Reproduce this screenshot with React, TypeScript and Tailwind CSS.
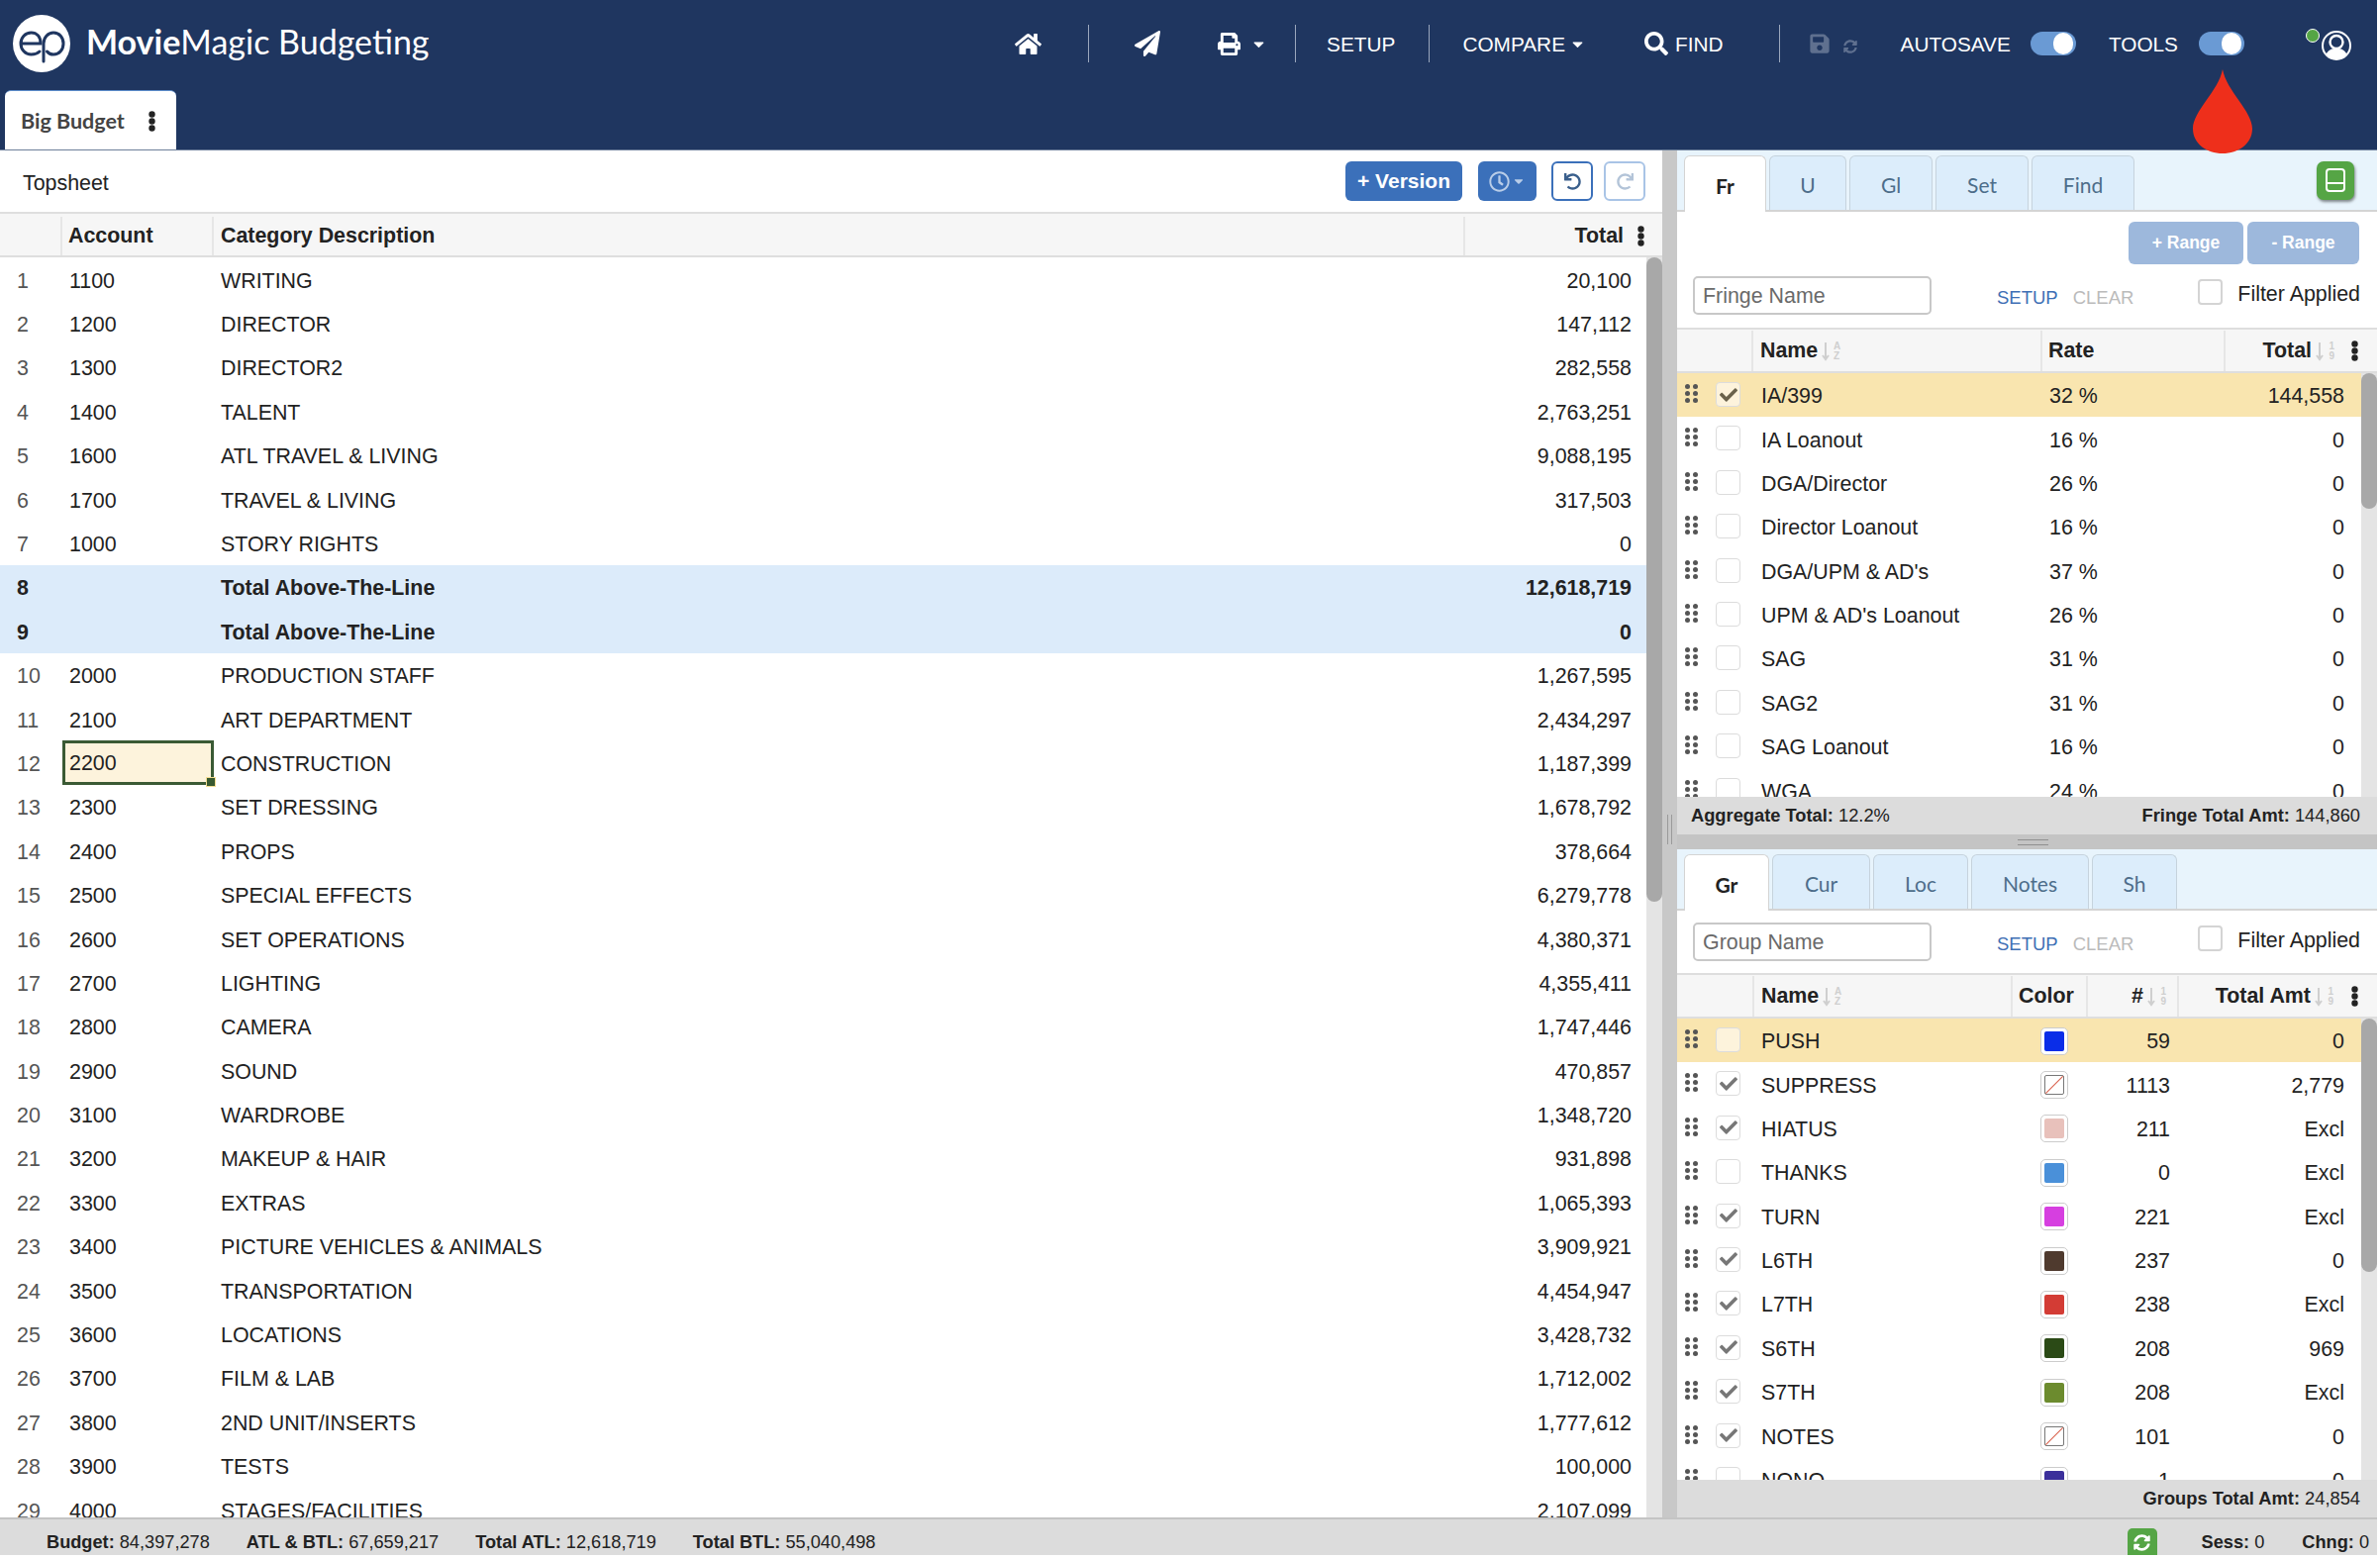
import React from 'react';
import { FaHome, FaPaperPlane, FaPrint, FaSearch, FaSave, FaSyncAlt, FaCheck, FaUndo, FaRedo, FaRegClock, FaCaretDown } from 'react-icons/fa';

const topsheet: Array<[string, string, string, string?]> = [
  ['1', '1100', 'WRITING', '20,100'],
  ['2', '1200', 'DIRECTOR', '147,112'],
  ['3', '1300', 'DIRECTOR2', '282,558'],
  ['4', '1400', 'TALENT', '2,763,251'],
  ['5', '1600', 'ATL TRAVEL & LIVING', '9,088,195'],
  ['6', '1700', 'TRAVEL & LIVING', '317,503'],
  ['7', '1000', 'STORY RIGHTS', '0'],
  ['8', '', 'Total Above-The-Line', '12,618,719'],
  ['9', '', 'Total Above-The-Line', '0'],
  ['10', '2000', 'PRODUCTION STAFF', '1,267,595'],
  ['11', '2100', 'ART DEPARTMENT', '2,434,297'],
  ['12', '2200', 'CONSTRUCTION', '1,187,399'],
  ['13', '2300', 'SET DRESSING', '1,678,792'],
  ['14', '2400', 'PROPS', '378,664'],
  ['15', '2500', 'SPECIAL EFFECTS', '6,279,778'],
  ['16', '2600', 'SET OPERATIONS', '4,380,371'],
  ['17', '2700', 'LIGHTING', '4,355,411'],
  ['18', '2800', 'CAMERA', '1,747,446'],
  ['19', '2900', 'SOUND', '470,857'],
  ['20', '3100', 'WARDROBE', '1,348,720'],
  ['21', '3200', 'MAKEUP & HAIR', '931,898'],
  ['22', '3300', 'EXTRAS', '1,065,393'],
  ['23', '3400', 'PICTURE VEHICLES & ANIMALS', '3,909,921'],
  ['24', '3500', 'TRANSPORTATION', '4,454,947'],
  ['25', '3600', 'LOCATIONS', '3,428,732'],
  ['26', '3700', 'FILM & LAB', '1,712,002'],
  ['27', '3800', '2ND UNIT/INSERTS', '1,777,612'],
  ['28', '3900', 'TESTS', '100,000'],
  ['29', '4000', 'STAGES/FACILITIES', '2,107,099'],
];

const fringes = [
  ['IA/399', '32 %', '144,558'],
  ['IA Loanout', '16 %', '0'],
  ['DGA/Director', '26 %', '0'],
  ['Director Loanout', '16 %', '0'],
  ['DGA/UPM & AD\'s', '37 %', '0'],
  ['UPM & AD\'s Loanout', '26 %', '0'],
  ['SAG', '31 %', '0'],
  ['SAG2', '31 %', '0'],
  ['SAG Loanout', '16 %', '0'],
  ['WGA', '24 %', '0'],
];

const groups: Array<{ name: string; on: boolean; color: string | null; n: string; amt: string }> = [
  { name: 'PUSH', on: false, color: '#0a2de8', n: '59', amt: '0' },
  { name: 'SUPPRESS', on: true, color: null, n: '1113', amt: '2,779' },
  { name: 'HIATUS', on: true, color: '#e8c1bb', n: '211', amt: 'Excl' },
  { name: 'THANKS', on: false, color: '#4a90d9', n: '0', amt: 'Excl' },
  { name: 'TURN', on: true, color: '#d63fe0', n: '221', amt: 'Excl' },
  { name: 'L6TH', on: true, color: '#4f3a2e', n: '237', amt: '0' },
  { name: 'L7TH', on: true, color: '#d33c35', n: '238', amt: 'Excl' },
  { name: 'S6TH', on: true, color: '#2b4a16', n: '208', amt: '969' },
  { name: 'S7TH', on: true, color: '#6c8b2e', n: '208', amt: 'Excl' },
  { name: 'NOTES', on: true, color: null, n: '101', amt: '0' },
  { name: 'NONO', on: false, color: '#3b2f9b', n: '1', amt: '0' },
];

const Logo = () => (
  <svg width="58" height="58" viewBox="0 0 58 58" className="ml-[13px] shrink-0">
    <circle cx="29" cy="29" r="29" fill="#fff" />
    <g fill="none" stroke="#1f3660" strokeWidth="3" strokeLinecap="round">
      <path d="M8 29 H28 C28 22 24 18 18.5 18 C12.5 18 8 23 8 29 C8 35 12.5 40 18.5 40 C22 40 25 39 27 37" />
      <path d="M31 47 V29 C31 23 35.500 18 41 18 C47 18 51 23 51 29 C51 35 47 40 41 40 C38.500 40 36 39 34.500 37" />
    </g>
  </svg>
);

const Toggle = () => (
  <div className="flex h-[24px] w-[46px] items-center justify-end rounded-full bg-[#6a9ad4] pr-[3px]">
    <div className="h-[22px] w-[20px] rounded-full bg-white" />
  </div>
);

const Sep = () => <div className="h-[38px] w-px bg-[#9aa7bd]" />;

const Dots = ({ className = '' }: { className?: string }) => (
  <svg width="7" height="21" viewBox="0 0 7 21" className={className} fill="#222">
    <circle cx="3.500" cy="3.500" r="3.200" />
    <circle cx="3.500" cy="10.500" r="3.200" />
    <circle cx="3.500" cy="17.500" r="3.200" />
  </svg>
);

const Grip = () => (
  <svg width="13" height="19" viewBox="0 0 13 19" className="ml-[8px] mt-[11px] shrink-0" fill="#555">
    <circle cx="2.500" cy="2.500" r="2.500" />
    <circle cx="10.500" cy="2.500" r="2.500" />
    <circle cx="2.500" cy="9.500" r="2.500" />
    <circle cx="10.500" cy="9.500" r="2.500" />
    <circle cx="2.500" cy="16.500" r="2.500" />
    <circle cx="10.500" cy="16.500" r="2.500" />
  </svg>
);

const Check = ({ on, active }: { on: boolean; active?: boolean }) => (
  <div
    className={`ml-[18px] mt-[9px] flex h-[25px] w-[25px] shrink-0 items-center justify-center rounded-[4px] border border-[#dcdcdc] ${
      active ? 'bg-[#fdf3dc]' : 'bg-white'
    }`}
  >
    {on && <FaCheck size={18} className={active ? 'text-[#6a624c]' : 'text-[#777777]'} />}
  </div>
);

const SortIcon = ({ top, bottom }: { top: string; bottom: string }) => (
  <span className="ml-[4px] inline-flex w-[19px] items-center justify-between">
    <svg width="8" height="20" viewBox="0 0 8 20" fill="none" stroke="#cfcfcf" strokeWidth="2">
      <path d="M4 1 V18 M1 14 L4 18 L7 14" />
    </svg>
    <span className="flex flex-col text-[10px] leading-[10px] font-bold text-[#cfcfcf]">
      <span>{top}</span>
      <span>{bottom}</span>
    </span>
  </span>
);

const Tabs = ({ tabs }: { tabs: Array<[string, string]> }) => (
  <div className="flex h-full items-end gap-[3px] pl-[7px]">
    {tabs.map(([label, width], i) => (
      <div
        key={label}
        className={`${width} flex items-center justify-center rounded-t-[6px] border border-b-0 pt-[3px] font-['Lato',sans-serif] text-[21px] ${
          i === 0
            ? '-mb-[2px] h-[57px] border-[#d4d4d4] bg-white font-bold text-[#222]'
            : 'h-[55px] border-[#c6d3dd] bg-[#dcedfb] text-[#4d6d8a]'
        }`}
      >
        {label}
      </div>
    ))}
  </div>
);

const FilterRow = ({ placeholder }: { placeholder: string }) => (
  <div className="flex items-center pl-[16px] pr-[17px]">
    <div className="flex h-[39px] w-[241px] items-center rounded-[5px] border-2 border-[#c8c8c8] bg-white pl-[8px] pt-[2px] text-[#6a6a6a]">
      {placeholder}
    </div>
    <span className="ml-[66px] pt-[4px] text-[18.5px] text-[#3f6fb5]">SETUP</span>
    <span className="ml-[15px] pt-[4px] text-[18.5px] text-[#bbbbbb]">CLEAR</span>
    <div className="ml-auto mt-[-6px] flex items-center">
      <div className="h-[26px] w-[25px] rounded-[4px] border-2 border-[#d4d4d4] bg-white" />
      <span className="ml-[15px] pt-[3px]">Filter Applied</span>
    </div>
  </div>
);

const ColorChip = ({ color }: { color: string | null }) => (
  <div className="mt-[1px] flex h-[28px] w-[28px] items-center justify-center rounded-[5px] border border-[#cccccc] bg-white p-[3px]">
    {color ? (
      <div className="h-full w-full rounded-[2px]" style={{ backgroundColor: color }} />
    ) : (
      <svg width="20" height="20" viewBox="0 0 20 20" className="rounded-[2px] border border-[#777]">
        <path d="M0 20 L20 0" stroke="#d9604c" strokeWidth="1.200" />
      </svg>
    )}
  </div>
);

const TrackThumb = ({ height }: { height: string }) => (
  <div className="w-[16px] shrink-0 bg-[#e4e4e4]">
    <div className={`${height} w-full rounded-full bg-[#a8a8a8]`} />
  </div>
);

export default function App() {
  return (
    <div className="relative flex h-[1571px] w-[2401px] flex-col overflow-hidden bg-white font-['Liberation_Sans',Arial,sans-serif] text-[21.4px] text-[#222]">
      {/* header */}
      <header className="h-[152px] shrink-0 border-b border-[#6d7f9a] bg-[#1f3660] text-white">
        <div className="flex h-[88px] items-center">
          <Logo />
          <div className="mb-[5px] ml-[16px] font-['Lato',sans-serif] text-[34px]">
            <span className="font-bold">Movie</span>Magic Budgeting
          </div>
          <div className="ml-auto flex items-center pr-[26px] text-[20.8px]">
            <FaHome size={27} />
            <div className="ml-[47px]"><Sep /></div>
            <FaPaperPlane size={26} className="ml-[46px]" />
            <FaPrint size={23} className="ml-[58px]" />
            <FaCaretDown size={17} className="ml-[10px]" />
            <div className="ml-[28px]"><Sep /></div>
            <span className="ml-[31px] pt-[2px]">SETUP</span>
            <div className="ml-[34px]"><Sep /></div>
            <span className="ml-[33px] pt-[2px]">COMPARE</span>
            <FaCaretDown size={17} className="ml-[4px]" />
            <FaSearch size={24} className="ml-[59px]" />
            <span className="ml-[7px] pt-[2px]">FIND</span>
            <div className="ml-[56px]"><Sep /></div>
            <FaSave size={22} className="ml-[29px] text-[#5f708f]" />
            <FaSyncAlt size={14} className="ml-[13px] mt-[6px] text-[#5f708f]" />
            <span className="ml-[44px] pt-[2px]">AUTOSAVE</span>
            <div className="ml-[20px]"><Toggle /></div>
            <span className="ml-[33px] pt-[2px]">TOOLS</span>
            <div className="ml-[21px]"><Toggle /></div>
            <div className="mb-[16px] ml-[62px] h-[14px] w-[14px] rounded-full border border-white bg-[#55a545]" />
            <svg width="30" height="30" viewBox="0 0 30 30" className="ml-[2px] mt-[4px]">
              <circle cx="15" cy="15" r="14" fill="none" stroke="#fff" strokeWidth="2" />
              <circle cx="15" cy="11.500" r="6.500" fill="none" stroke="#fff" strokeWidth="2.400" />
              <path d="M4.500 24 C7 19 10 18 15 18 C20 18 23 19 25.500 24 C22 28 19 29 15 29 C11 29 7 28 4.500 24 Z" fill="#fff" />
            </svg>
          </div>
        </div>
        <div className="flex h-[63px] items-end pl-[5px]">
          <div className="flex h-[60px] w-[173px] items-center rounded-t-[6px] border-t border-[#5b8bc9] bg-white pl-[16px] pt-[2px] font-['Lato',sans-serif] text-[21.5px] font-bold text-[#444]">
            Big Budget
            <Dots className="ml-[24px]" />
          </div>
        </div>
      </header>

      <main className="flex min-h-0 flex-1">
        {/* topsheet */}
        <section className="flex w-[1679px] shrink-0 flex-col">
          <div className="flex h-[62px] shrink-0 items-center pl-[23px] pr-[17px]">
            <span className="pt-[5px]">Topsheet</span>
            <div className="ml-auto flex h-[40px] w-[118px] items-center justify-center rounded-[6px] bg-[#3b70ba] text-[21px] font-bold text-white">
              + Version
            </div>
            <div className="ml-[16px] flex h-[40px] w-[59px] items-center justify-center rounded-[6px] bg-[#3b70ba] text-[#b9cde8]">
              <FaRegClock size={21} />
              <FaCaretDown size={14} className="ml-[2px]" />
            </div>
            <div className="ml-[15px] flex h-[40px] w-[42px] items-center justify-center rounded-[6px] border-2 border-[#3b70ba] text-[#3a5f8c]">
              <FaUndo size={17} />
            </div>
            <div className="ml-[11px] flex h-[40px] w-[42px] items-center justify-center rounded-[6px] border-2 border-[#a9c4e6] text-[#b3c4d8]">
              <FaRedo size={17} />
            </div>
          </div>
          <div className="flex h-[46px] shrink-0 border-y-2 border-[#dedede] bg-[#f6f6f6] pt-[3px] font-bold">
            <div className="w-[63px] border-r-2 border-[#e6e6e6]" />
            <div className="flex w-[153px] items-center border-r-2 border-[#e6e6e6] pl-[6px]">Account</div>
            <div className="flex w-[1264px] items-center border-r-2 border-[#e6e6e6] pl-[7px]">Category Description</div>
            <div className="flex flex-1 items-center justify-end pr-[18px]">
              Total
              <Dots className="ml-[14px]" />
            </div>
          </div>
          <div className="flex min-h-0 flex-1">
            <div className="min-w-0 flex-1 overflow-hidden">
              {topsheet.map(([idx, acct, desc, total]) => {
                const subtotal = acct === '';
                const selected = acct === '2200';
                return (
                  <div key={idx} className={`flex h-[44.4px] items-center ${subtotal ? 'bg-[#dcebfa] font-bold' : ''}`}>
                    <div className={`w-[63px] pl-[17px] pt-[3px] ${subtotal ? 'text-[#222]' : 'text-[#555]'}`}>{idx}</div>
                    <div
                      className={`relative flex h-full w-[153px] items-center pl-[7px] pt-[3px] ${
                        selected ? 'border-[3px] border-[#3a5a34] bg-[#fdf3dc] !pl-[4px] !pt-[1px]' : ''
                      }`}
                    >
                      {acct}
                      {selected && (
                        <div className="absolute -bottom-[5px] -right-[5px] h-[10px] w-[10px] border border-[#f3dc92] bg-[#38592f]" />
                      )}
                    </div>
                    <div className="w-[1264px] pl-[7px] pt-[3px]">{desc}</div>
                    <div className="flex-1 pr-[15px] pt-[3px] text-right">{total}</div>
                  </div>
                );
              })}
            </div>
            <TrackThumb height="h-[651px]" />
          </div>
        </section>

        {/* splitter */}
        <div className="flex w-[15px] shrink-0 items-center justify-center bg-[#c8c8c8]">
          <div className="mb-[10px] h-[30px] w-[5px] border-x border-[#9a9a9a]" />
        </div>

        {/* right panes */}
        <section className="flex min-w-0 flex-1 flex-col">
          {/* fringes */}
          <div className="h-[62px] shrink-0 border-b-2 border-[#d4d4d4] bg-[#e8f4fc]">
            <div className="flex h-full items-center">
              <Tabs tabs={[['Fr', 'w-[83px]'], ['U', 'w-[78px]'], ['Gl', 'w-[84px]'], ['Set', 'w-[94px]'], ['Find', 'w-[104px]']]} />
              <div className="ml-auto mr-[23px] flex h-[39px] w-[38px] items-center justify-center rounded-[7px] bg-[#55a545] shadow-[1px_2px_3px_rgba(0,0,0,0.45)]">
                <svg width="20" height="24" viewBox="0 0 20 24" fill="none" stroke="#fff" strokeWidth="2">
                  <rect x="1" y="1" width="18" height="22" rx="3" />
                  <path d="M1 15 H19" />
                </svg>
              </div>
            </div>
          </div>
          <div className="flex h-[117px] shrink-0 flex-col">
            <div className="flex justify-end gap-[4px] pr-[18px] pt-[10px]">
              <div className="flex h-[43px] w-[116px] items-center justify-center rounded-[6px] bg-[#9db8dc] text-[17.5px] font-bold text-white">+ Range</div>
              <div className="flex h-[43px] w-[113px] items-center justify-center rounded-[6px] bg-[#9db8dc] text-[17.5px] font-bold text-white">- Range</div>
            </div>
            <div className="mt-[12px]">
              <FilterRow placeholder="Fringe Name" />
            </div>
          </div>
          <div className="flex h-[46px] shrink-0 border-y-2 border-[#dedede] bg-[#f6f6f6] pt-[1px] font-bold">
            <div className="w-[77px] border-r-2 border-[#e6e6e6]" />
            <div className="flex w-[292px] items-center border-r-2 border-[#e6e6e6] pl-[7px]">
              Name
              <SortIcon top="A" bottom="Z" />
            </div>
            <div className="flex w-[185px] items-center border-r-2 border-[#e6e6e6] pl-[6px]">Rate</div>
            <div className="flex flex-1 items-center justify-end pr-[19px]">
              Total
              <SortIcon top="1" bottom="9" />
              <Dots className="ml-[17px]" />
            </div>
          </div>
          <div className="flex h-[428px] shrink-0">
            <div className="min-w-0 flex-1 overflow-hidden">
              {fringes.map(([name, rate, total], i) => (
                <div key={name} className={`flex h-[44.4px] ${i === 0 ? 'bg-[#f9e5af]' : ''}`}>
                  <div className="flex w-[77px]">
                    <Grip />
                    <Check on={i === 0} active={i === 0} />
                  </div>
                  <div className="flex w-[292px] items-center pl-[8px] pt-[2px]">{name}</div>
                  <div className="flex w-[185px] items-center pl-[7px] pt-[2px]">{rate}</div>
                  <div className="flex flex-1 items-center justify-end pr-[17px] pt-[2px]">{total}</div>
                </div>
              ))}
            </div>
            <TrackThumb height="h-[137px]" />
          </div>
          <div className="flex h-[38px] shrink-0 items-center justify-between bg-[#dcdcdc] pl-[14px] pr-[17px] text-[18.3px]">
            <span><b>Aggregate Total:</b> 12.2%</span>
            <span><b>Fringe Total Amt:</b> 144,860</span>
          </div>
          <div className="flex h-[15px] shrink-0 items-center justify-center bg-[#c4c4c4] pl-[12px]">
            <div className="h-[6px] w-[31px] border-y border-[#8f8f8f]" />
          </div>

          {/* groups */}
          <div className="h-[62px] shrink-0 border-b-2 border-[#d4d4d4] bg-[#e8f4fc]">
            <Tabs tabs={[['Gr', 'w-[86px]'], ['Cur', 'w-[99px]'], ['Loc', 'w-[96px]'], ['Notes', 'w-[119px]'], ['Sh', 'w-[86px]']]} />
          </div>
          <div className="flex h-[63px] shrink-0 flex-col pt-[12px]">
            <FilterRow placeholder="Group Name" />
          </div>
          <div className="flex h-[46px] shrink-0 border-y-2 border-[#dedede] bg-[#f6f6f6] pt-[1px] font-bold">
            <div className="w-[78px] border-r-2 border-[#e6e6e6]" />
            <div className="flex w-[261px] items-center border-r-2 border-[#e6e6e6] pl-[7px]">
              Name
              <SortIcon top="A" bottom="Z" />
            </div>
            <div className="flex w-[76px] items-center justify-center border-r-2 border-[#e6e6e6] pr-[6px]">Color</div>
            <div className="flex w-[92px] items-center justify-end border-r-2 border-[#e6e6e6] pr-[11px]">
              #
              <SortIcon top="1" bottom="9" />
            </div>
            <div className="flex flex-1 items-center justify-end pr-[19px]">
              Total Amt
              <SortIcon top="1" bottom="9" />
              <Dots className="ml-[18px]" />
            </div>
          </div>
          <div className="flex min-h-0 flex-1">
            <div className="min-w-0 flex-1 overflow-hidden">
              {groups.map((g, i) => (
                <div key={g.name} className={`flex h-[44.4px] ${i === 0 ? 'bg-[#f9e5af]' : ''}`}>
                  <div className="flex w-[78px]">
                    <Grip />
                    <Check on={g.on} active={i === 0} />
                  </div>
                  <div className="flex w-[261px] items-center pl-[7px] pt-[2px]">{g.name}</div>
                  <div className="flex w-[76px] items-center justify-center pl-[8px]">
                    <ColorChip color={g.color} />
                  </div>
                  <div className="flex w-[92px] items-center justify-end pr-[9px] pt-[2px]">{g.n}</div>
                  <div className="flex flex-1 items-center justify-end pr-[17px] pt-[2px]">{g.amt}</div>
                </div>
              ))}
            </div>
            <TrackThumb height="h-[256px]" />
          </div>
          <div className="flex h-[38px] shrink-0 items-center justify-end bg-[#dcdcdc] pr-[17px] text-[18.3px]">
            <span><b>Groups Total Amt:</b> 24,854</span>
          </div>
        </section>
      </main>

      {/* status bar */}
      <footer className="flex h-[38px] shrink-0 items-center border-t-2 border-[#c4c4c4] bg-[#dcdcdc] pt-[11px] text-[18.2px]">
        <span className="ml-[47px]"><b>Budget:</b> 84,397,278</span>
        <span className="ml-[37px]"><b>ATL &amp; BTL:</b> 67,659,217</span>
        <span className="ml-[37px]"><b>Total ATL:</b> 12,618,719</span>
        <span className="ml-[37px]"><b>Total BTL:</b> 55,040,498</span>
        <div className="ml-auto -mb-[1px] flex h-[28px] w-[30px] items-center justify-center self-end rounded-t-[5px] bg-[#55a545] text-white">
          <FaSyncAlt size={17} />
        </div>
        <span className="ml-[45px]"><b>Sess:</b> 0</span>
        <span className="ml-[38px] mr-[8px]"><b>Chng:</b> 0</span>
      </footer>

      {/* red drop marker over the header */}
      <svg width="60" height="85" viewBox="0 0 60 85" className="absolute left-[2215px] top-[70px]">
        <path d="M30 0 C34 22 60 42 60 60 C60 75 46 85 30 85 C14 85 0 75 0 60 C0 42 26 22 30 0 Z" fill="#ee2f1b" />
      </svg>
    </div>
  );
}
